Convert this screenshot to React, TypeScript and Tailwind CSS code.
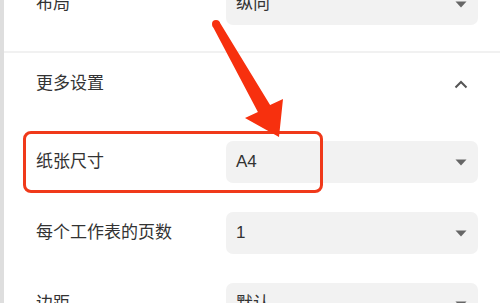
import React from "react";

function Caret() {
  return (
    <svg width="12" height="7" viewBox="0 0 12 7" className="shrink-0">
      <path d="M0.5 0.5 L11.5 0.5 L6 6.5 Z" fill="#666666" />
    </svg>
  );
}

function SelectRow({ label, value }: { label: string; value: string }) {
  return (
    <div className="flex items-center h-[42px]">
      <span className="flex-1 pl-[32px] text-[17px] text-[#333333]">{label}</span>
      <div className="w-[252px] h-full mr-[22px] rounded-[7px] bg-[#f2f2f2] flex items-center justify-between pl-[10px] pr-[11px]">
        <span className="text-[17px] text-[#333333]">{value}</span>
        <Caret />
      </div>
    </div>
  );
}

export default function App() {
  return (
    <div className="relative w-[500px] h-[303px] overflow-hidden bg-white flex font-['Liberation_Sans','Noto_Sans_CJK_SC',sans-serif]">
      <div className="w-[4px] shrink-0 bg-[#dedede]" />
      <div className="flex-1 -mt-[17px]">
        <SelectRow label="布局" value="纵向" />
        <div className="mt-[26px] h-[2px] bg-[#f1f1f1]" />
        <div className="h-[62px] flex items-center justify-between pl-[32px] pr-[32px]">
          <span className="text-[17px] text-[#333333]">更多设置</span>
          <svg width="14" height="9" viewBox="0 0 14 9">
            <path d="M1.5 7.5 L7 2 L12.5 7.5" fill="none" stroke="#555555" strokeWidth="2" />
          </svg>
        </div>
        <div className="mt-[26px] flex flex-col gap-[29px]">
          <SelectRow label="纸张尺寸" value="A4" />
          <SelectRow label="每个工作表的页数" value="1" />
          <SelectRow label="边距" value="默认" />
        </div>
      </div>

      {/* annotation overlay */}
      <div className="absolute left-[23px] top-[131px] w-[300px] h-[62px] border-[3px] border-[#f0391a] rounded-[8px]" />
      <svg className="absolute left-0 top-0" width="500" height="303" viewBox="0 0 500 303">
        <circle cx="216" cy="24" r="4" fill="#f7300e" />
        <polygon
          points="212.5,25.9 257.9,111.9 245,118 279,137 283,99 270.1,105.1 219.5,22.1"
          fill="#f7300e"
        />
      </svg>
    </div>
  );
}
